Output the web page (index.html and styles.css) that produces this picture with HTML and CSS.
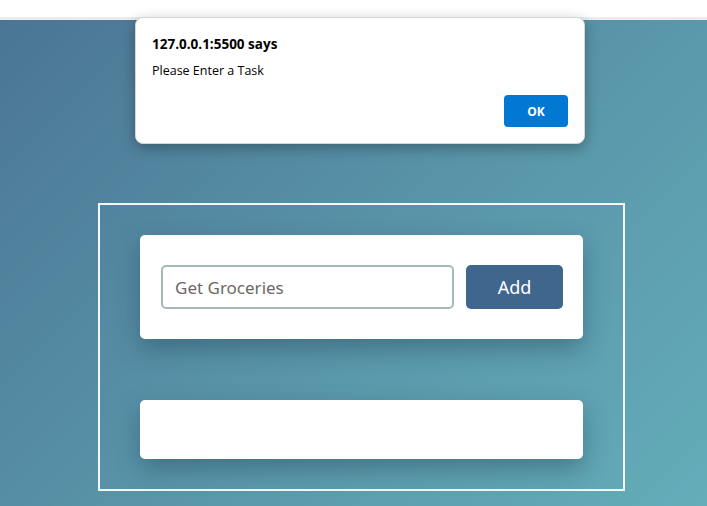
FILE: index.html
```html
<!DOCTYPE html>
<html>
<head>
<meta charset="utf-8">
<link rel="stylesheet" href="styles.css">
</head>
<body>
<div class="topbar"></div>
<main class="page">
  <section class="frame">
    <form class="card entry" onsubmit="return false">
      <input class="task-input" type="text" placeholder="Get Groceries">
      <button class="add-btn" type="button">Add</button>
    </form>
    <div class="card list"></div>
  </section>
</main>
<div class="dialog">
  <div class="dialog-title">127.0.0.1:5500 says</div>
  <div class="dialog-msg">Please Enter a Task</div>
  <div class="dialog-actions"><button class="ok-btn" type="button">OK</button></div>
</div>
</body>
</html>
```
FILE: styles.css
```css
* { box-sizing: border-box; }
html, body { margin: 0; height: 100%; }
body {
  font-family: "Noto Sans", "Open Sans", sans-serif;
  background: linear-gradient(135deg, #4a7494 0%, #5893a8 50%, #64adb9 100%);
  overflow: hidden;
}
.topbar {
  height: 20px;
  background: #fff;
  border-bottom: 3px solid #ececec;
}
.page {
  padding: 183px 0 0 98px;
}
.frame {
  width: 527px;
  height: 288px;
  border: 2px solid #f4f8f9;
  padding: 30px 40px;
  display: flex;
  flex-direction: column;
  gap: 61px;
}
.card {
  background: #fff;
  border-radius: 5px;
  box-shadow: 0 10px 24px rgba(30, 60, 80, 0.4);
}
.entry {
  margin: 0;
  height: 104px;
  padding: 30px 20px 30px 21px;
  display: flex;
  gap: 12px;
}
.task-input {
  flex: 1;
  height: 44px;
  border: 2px solid #a5b9b8;
  border-radius: 5px;
  padding: 0 12px;
  font-family: "Noto Sans", sans-serif;
  font-size: 17px;
  outline: none;
}
.task-input::placeholder { color: #6f6765; }
.add-btn {
  width: 97px;
  height: 44px;
  border: none;
  border-radius: 5px;
  background: #3f668c;
  color: #fff;
  font-family: "Noto Sans", sans-serif;
  font-size: 18px;
}
.list { height: 59px; }
.dialog {
  position: absolute;
  left: 135px;
  top: 17px;
  width: 450px;
  height: 127px;
  background: #fff;
  border: 1px solid #d6d6d6;
  border-radius: 8px;
  box-shadow: 0 4px 14px rgba(0, 0, 0, 0.3);
  padding: 17px 16px 16px 16px;
  font-family: "Open Sans", "Noto Sans", sans-serif;
  color: #000;
}
.dialog-title {
  font-weight: 700;
  font-size: 13.5px;
  line-height: 18px;
}
.dialog-msg {
  margin-top: 9px;
  font-size: 12.5px;
  line-height: 18px;
}
.dialog-actions {
  display: flex;
  justify-content: flex-end;
  margin-top: 15px;
}
.ok-btn {
  width: 64px;
  height: 32px;
  border: none;
  border-radius: 4px;
  background: #0078d4;
  color: #fff;
  font-family: "Open Sans", sans-serif;
  font-weight: 700;
  font-size: 12px;
}
```
